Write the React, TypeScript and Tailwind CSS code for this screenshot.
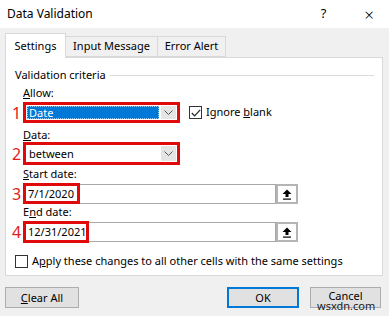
import React from "react";

function Chevron() {
  return (
    <svg width="9" height="5" viewBox="0 0 9 5" fill="none">
      <path d="M0.5 0.5 L4.5 4.5 L8.5 0.5" stroke="#555" strokeWidth="1" />
    </svg>
  );
}

function CollapseButton() {
  return (
    <div className="w-[22px] h-[20px] border-2 border-[#b4b4b4] bg-white flex items-center justify-center">
      <svg width="10" height="11" viewBox="0 0 10 11">
        <path d="M5 0.5 L9.5 5 H6.5 V8 H3.5 V5 H0.5 Z" fill="#000" />
        <rect x="1" y="9.5" width="8" height="1.2" fill="#000" />
      </svg>
    </div>
  );
}

function Num({ n }: { n: string }) {
  return (
    <span className="w-[17px] pl-[6px] text-[16px] leading-none text-[#e0201c]">
      {n}
    </span>
  );
}

export default function App() {
  return (
    <div
      className="w-[389px] h-[316px] bg-[#f0f0f0] text-[11px] text-black relative overflow-hidden"
      style={{ fontFamily: '"Noto Sans", "Open Sans", sans-serif' }}
    >
      {/* title bar */}
      <div className="h-[28px] bg-white flex items-center pl-[7px]">
        <span className="text-[12px]">Data Validation</span>
        <span className="ml-auto text-[13px] mr-[38px]">?</span>
        <span className="text-[17px] font-light mr-[15px] leading-none">×</span>
      </div>

      {/* tabs */}
      <div className="flex items-end h-[29px] pl-[5px]">
        <div className="h-[25px] w-[61px] bg-white border border-b-0 border-[#d9d9d9] flex items-center justify-center relative top-[1px]">
          Settings
        </div>
        <div className="h-[21px] w-[92px] border border-l-0 border-[#d9d9d9] flex items-center justify-center">
          Input Message
        </div>
        <div className="h-[21px] w-[68px] border border-l-0 border-[#d9d9d9] flex items-center justify-center">
          Error Alert
        </div>
      </div>

      {/* panel */}
      <div className="ml-[5px] w-[378px] h-[219px] bg-white border border-[#d9d9d9]">
        <div className="flex items-center mt-[9px] pl-[9px] h-[16px]">
          <span>Validation criteria</span>
          <div className="ml-[4px] flex-1 mr-[8px] h-px bg-[#dcdcdc]" />
        </div>

        <div className="pl-[17px] mt-[2px] h-[16px] leading-[16px]">
          <span className="underline">A</span>llow:
        </div>

        <div className="flex items-center mt-[1px]">
          <Num n="1" />
          <div className="w-[157px] h-[21px] border-[3px] border-[#e00a0a] flex items-stretch p-px">
            <div className="flex-1 bg-[#0078d7] text-white leading-[13px] pl-[2px] outline-1 outline-dotted outline-[#9cc9f0] -outline-offset-1">
              Date
            </div>
            <div className="w-[15px] ml-[2px] bg-[#e5e5e5] flex items-center justify-center">
              <Chevron />
            </div>
          </div>
          <div className="ml-[9px] w-[13px] h-[13px] border border-[#333] flex items-center justify-center">
            <svg width="10" height="8" viewBox="0 0 10 8" fill="none">
              <path d="M0.8 4 L3.6 6.8 L9.2 0.8" stroke="#222" strokeWidth="1.2" />
            </svg>
          </div>
          <span className="ml-[4px]">
            Ignore <span className="underline">b</span>lank
          </span>
        </div>

        <div className="pl-[17px] mt-[4px] h-[15px] leading-[15px]">
          <span className="underline">D</span>ata:
        </div>

        <div className="flex items-center">
          <Num n="2" />
          <div className="w-[157px] h-[23px] border-[3px] border-[#e00a0a] flex items-stretch p-px">
            <div className="flex-1 leading-[15px] pl-[2px]">between</div>
            <div className="w-[15px] bg-[#e5e5e5] flex items-center justify-center">
              <Chevron />
            </div>
          </div>
        </div>

        <div className="pl-[17px] mt-[1px] h-[16px] leading-[16px]">
          <span className="underline">S</span>tart date:
        </div>

        <div className="flex items-center mt-[2px]">
          <Num n="3" />
          <div className="w-[253px] h-[20px] border border-[#a8a8a8] relative">
            <div className="absolute -left-px -top-[2px] w-[57px] h-[21px] border-[3px] border-[#e00a0a] leading-[15px] pl-[2px]">
              7/1/2020
            </div>
          </div>
          <CollapseButton />
        </div>

        <div className="pl-[17px] h-[16px] leading-[16px]">
          E<span className="underline">n</span>d date:
        </div>

        <div className="flex items-center mt-[2px]">
          <Num n="4" />
          <div className="w-[253px] h-[20px] border border-[#a8a8a8] relative">
            <div className="absolute -left-px -top-[2px] w-[66px] h-[22px] border-[3px] border-[#e00a0a] leading-[16px] pl-[2px]">
              12/31/2021
            </div>
          </div>
          <CollapseButton />
        </div>

        <div className="flex items-center mt-[11px] pl-[9px]">
          <div className="w-[13px] h-[13px] border border-[#333]" />
          <span className="ml-[4px]">
            A<span className="underline">p</span>ply these changes to all other
            cells with the same settings
          </span>
        </div>
      </div>

      {/* buttons */}
      <div className="flex items-center mt-[11px] px-[5px]">
        <button className="w-[74px] h-[21px] bg-[#e1e1e1] border border-[#adadad] leading-none">
          <span className="underline">C</span>lear All
        </button>
        <button className="ml-auto w-[72px] h-[21px] bg-[#e1e1e1] border-2 border-[#0078d7] leading-none">
          OK
        </button>
        <button className="ml-[11px] w-[71px] h-[21px] bg-[#e1e1e1] border border-[#adadad] leading-none mr-[3px] pb-[4px]">
          Cancel
        </button>
      </div>

      <span className="absolute left-[316px] top-[300px] text-[11px] leading-[11px] text-[#222] px-px">
        wsxdn.com
      </span>
    </div>
  );
}
